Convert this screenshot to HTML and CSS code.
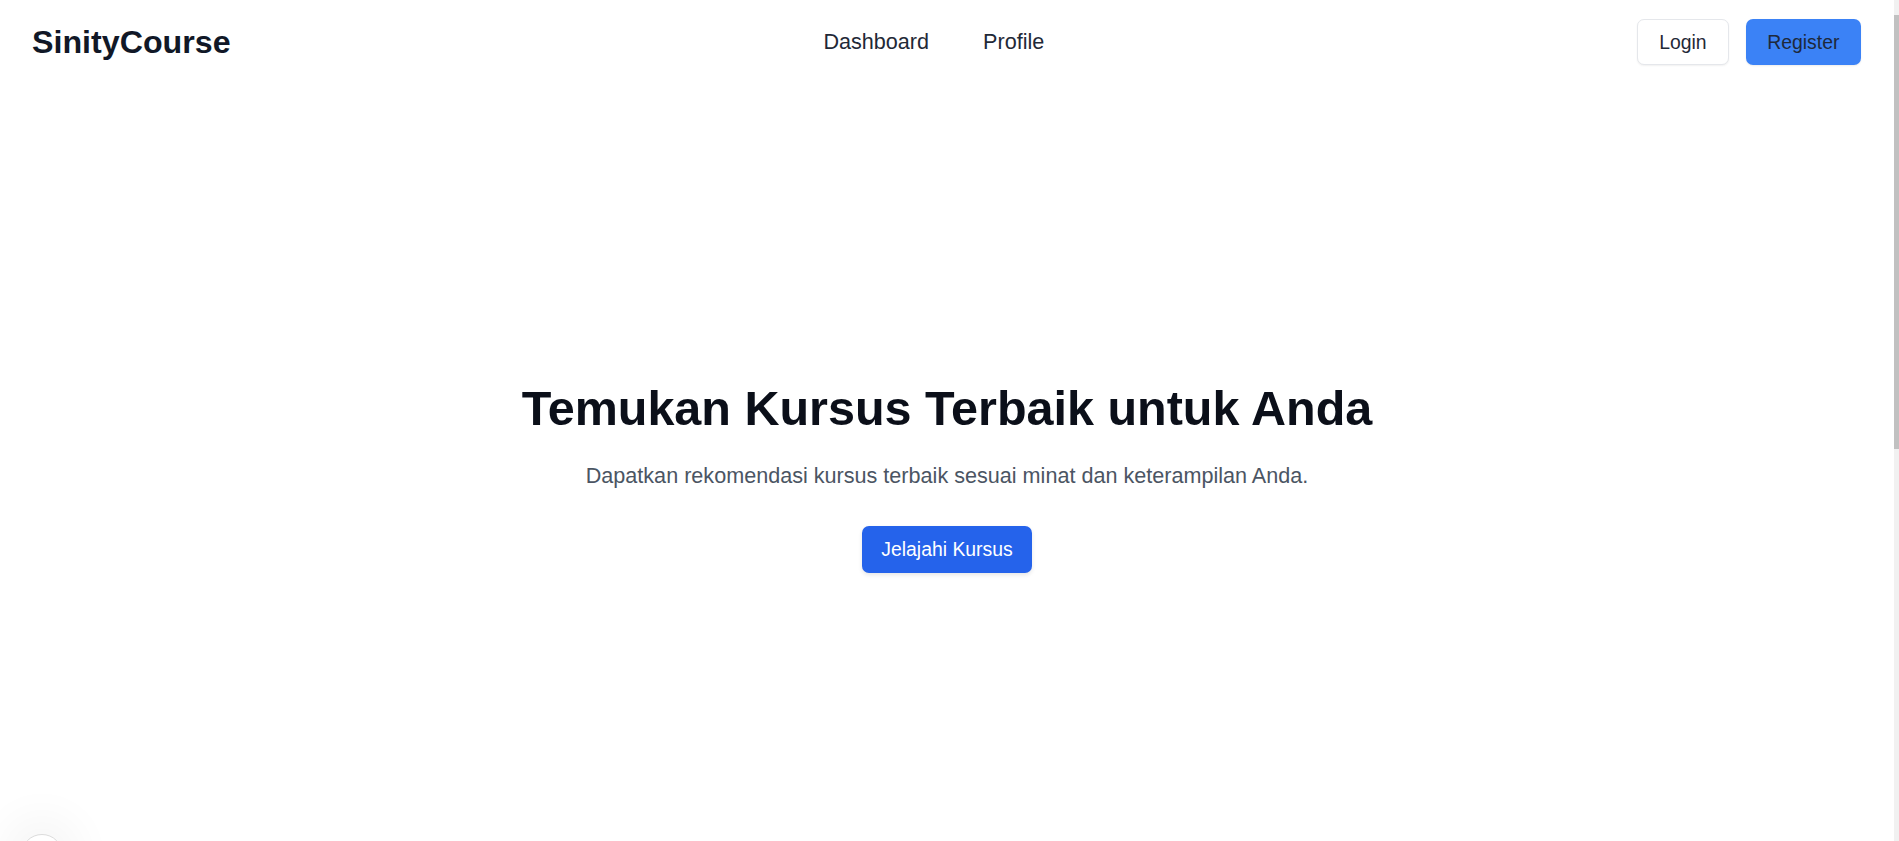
FILE: index.html
```html
<!DOCTYPE html>
<html lang="id">
<head>
<meta charset="utf-8">
<title>SinityCourse</title>
<link rel="stylesheet" href="styles.css">
</head>
<body>
<header class="topbar">
  <div class="brand">SinityCourse</div>
  <nav class="menu">
    <a class="menu-link" href="#">Dashboard</a>
    <a class="menu-link" href="#">Profile</a>
  </nav>
  <div class="auth">
    <button class="btn btn-login">Login</button>
    <button class="btn btn-register">Register</button>
  </div>
</header>
<main class="hero">
  <h1 class="hero-title">Temukan Kursus Terbaik untuk Anda</h1>
  <p class="hero-sub">Dapatkan rekomendasi kursus terbaik sesuai minat dan keterampilan Anda.</p>
  <button class="btn-cta">Jelajahi Kursus</button>
</main>
<section class="below"></section>
<div class="float-bubble"></div>
<div class="scrollbar"><div class="scrollbar-thumb"></div></div>
</body>
</html>
```
FILE: styles.css
```css
html { background: #ffffff; }
::-webkit-scrollbar { width: 0; height: 0; }

body {
  margin: 0 5px 0 0;
  position: relative;
  font-family: "Liberation Sans", Arial, sans-serif;
  color: #111827;
  background: #ffffff;
}

.topbar {
  height: 84px;
  display: flex;
  align-items: center;
  justify-content: space-between;
  padding: 0 33px 0 32px;
}

.brand {
  font-size: 32.2px;
  font-weight: 700;
  color: #111827;
}

.menu {
  display: flex;
  gap: 54px;
}

.menu-link {
  font-size: 21.6px;
  color: #1f2937;
  text-decoration: none;
}

.auth {
  display: flex;
  gap: 17px;
}

.btn {
  font-family: "Liberation Sans", Arial, sans-serif;
  font-size: 19.4px;
  line-height: 28px;
  height: 46px;
  padding: 0 21px;
  border-radius: 7px;
  cursor: pointer;
}

.btn-login {
  background: #ffffff;
  color: #1f2937;
  border: 1px solid #e5e7eb;
  box-shadow: 0 1px 2px rgba(0, 0, 0, 0.06);
}

.btn-register {
  background: #3b82f6;
  color: #1e293b;
  border: none;
  padding: 0 21.6px;
  box-shadow: 0 1px 2px rgba(0, 0, 0, 0.08);
}

.hero {
  display: flex;
  flex-direction: column;
  align-items: center;
  padding-top: 300px;
}

.hero-title {
  margin: 0;
  font-size: 48.5px;
  line-height: 48px;
  font-weight: 700;
  color: #0b0f19;
}

.hero-sub {
  margin: 30px 0 0;
  font-size: 21.6px;
  line-height: 28px;
  color: #4b5563;
}

.btn-cta {
  margin-top: 36px;
  height: 47px;
  padding: 0 19.7px;
  border: none;
  border-radius: 7px;
  background: #2563eb;
  color: #ffffff;
  font-family: "Liberation Sans", Arial, sans-serif;
  font-size: 19.4px;
  box-shadow: 0 2px 4px rgba(0, 0, 0, 0.1);
  cursor: pointer;
}

.below {
  height: 999px;
}

.float-bubble {
  position: absolute;
  top: 834px;
  left: 21px;
  width: 40px;
  height: 40px;
  border-radius: 50%;
  background: #ffffff;
  border: 1px solid #dcdcdc;
  box-shadow: 0 0 40px 20px rgba(0, 0, 0, 0.035);
}

.scrollbar {
  position: fixed;
  top: 0;
  right: 0;
  bottom: 0;
  width: 5px;
  background: #f1f1f1;
  padding: 15px 0;
  box-sizing: border-box;
}

.scrollbar-thumb {
  height: 434px;
  background: #c1c1c1;
}
```
